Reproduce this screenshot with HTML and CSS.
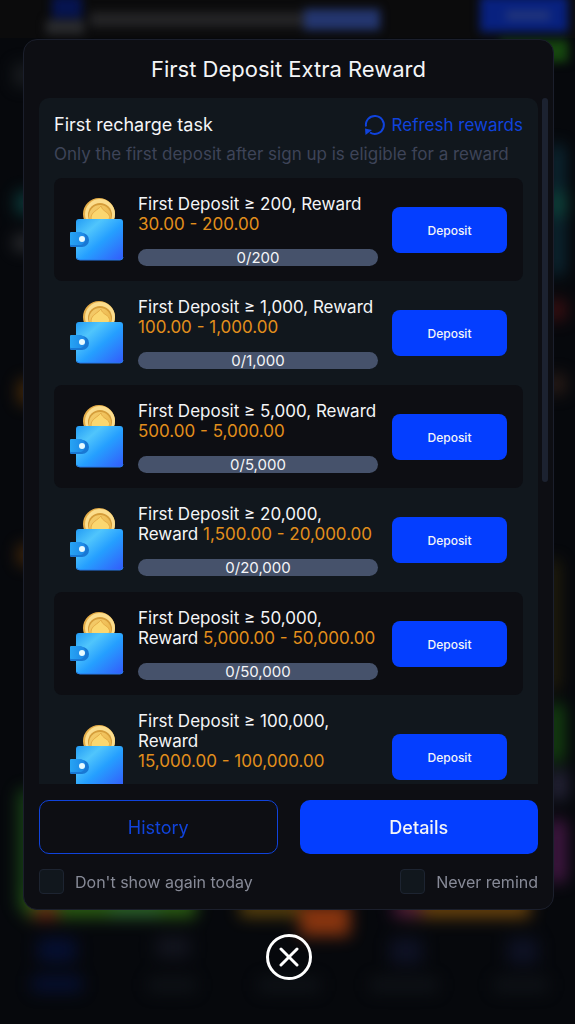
FILE: index.html
```html
<!DOCTYPE html>
<html lang="en">
<head>
    <meta charset="UTF-8">
    <meta name="viewport" content="width=device-width, initial-scale=1.0">
    <title>First Deposit Extra Reward</title>
    <link rel="stylesheet" href="styles.css">
</head>
<body>
    <!-- blurred page behind the modal -->
    <svg class="backdrop" viewBox="0 0 575 1024" preserveAspectRatio="none" aria-hidden="true">
        <defs>
            <filter id="soft" x="-10%" y="-50%" width="120%" height="200%" color-interpolation-filters="sRGB"><feGaussianBlur stdDeviation="5"/></filter>
            <filter id="softer" x="-10%" y="-10%" width="120%" height="120%" color-interpolation-filters="sRGB"><feGaussianBlur stdDeviation="8"/></filter>
        </defs>
        <rect width="575" height="1024" fill="#06080c"/>
        <rect width="575" height="38" fill="#0b0b0c"/>
        <g filter="url(#soft)">
            <rect x="52" y="-4" width="30" height="22" fill="#061450"/>
            <rect x="46" y="20" width="38" height="14" fill="#2a2b2e"/>
            <rect x="90" y="12" width="214" height="15" fill="#242426"/>
            <rect x="304" y="9" width="76" height="21" fill="#24366f"/>
            <rect x="480" y="-4" width="88" height="36" fill="#08217f"/>
            <rect x="506" y="11" width="44" height="9" fill="#24377a"/>
            <rect x="500" y="40" width="68" height="22" fill="#16460f"/>
        </g>
        <g filter="url(#softer)" opacity="0.8">
            <rect x="14" y="64" width="20" height="22" fill="#202326"/>
            <rect x="16" y="192" width="20" height="22" fill="#0d4a48"/>
            <rect x="14" y="236" width="20" height="14" fill="#3c3d40"/>
            <rect x="18" y="380" width="20" height="24" fill="#563207"/>
            <rect x="550" y="145" width="14" height="130" fill="#0f3544"/>
            <rect x="548" y="192" width="18" height="24" fill="#10594e"/>
            <rect x="546" y="300" width="20" height="20" fill="#4a1113"/>
            <rect x="546" y="374" width="20" height="20" fill="#33211a"/>
            <rect x="18" y="545" width="18" height="20" fill="#573109"/>
            <rect x="546" y="560" width="14" height="130" fill="#2c250b"/>
            <rect x="18" y="790" width="40" height="120" fill="#1c5018"/>
            <rect x="546" y="704" width="18" height="58" fill="#195211"/>
            <rect x="548" y="770" width="20" height="30" fill="#2b2940"/>
            <rect x="548" y="820" width="18" height="62" fill="#551c54"/>
            <rect x="26" y="890" width="170" height="28" fill="#326e14"/>
            <rect x="34" y="905" width="24" height="14" fill="#8a2c14"/>
            <rect x="110" y="904" width="50" height="12" fill="#34783a"/>
            <rect x="240" y="898" width="60" height="19" fill="#6f500c"/>
            <rect x="300" y="904" width="50" height="32" fill="#a84010"/>
            <rect x="400" y="896" width="130" height="22" fill="#80500c"/>
            <rect x="392" y="904" width="30" height="12" fill="#5a164e"/>
            <rect x="38" y="938" width="38" height="24" fill="#06113a"/>
            <rect x="32" y="976" width="50" height="16" fill="#06113a"/>
            <rect x="156" y="936" width="34" height="22" fill="#151722"/>
            <rect x="148" y="978" width="48" height="14" fill="#11151a"/>
            <rect x="258" y="978" width="62" height="14" fill="#11151a"/>
            <rect x="390" y="938" width="32" height="26" fill="#10142a"/>
            <rect x="370" y="978" width="68" height="14" fill="#11151a"/>
            <rect x="508" y="938" width="30" height="26" fill="#10142a"/>
            <rect x="494" y="978" width="54" height="14" fill="#11151a"/>
        </g>
    </svg>

    <!-- shared icon -->
    <svg class="sprite" aria-hidden="true">
        <defs>
            <linearGradient id="walletFill" x1="0" y1="0" x2="1" y2="1">
                <stop offset="0" stop-color="#239cf5"/>
                <stop offset="0.28" stop-color="#50c5fc"/>
                <stop offset="0.55" stop-color="#259fff"/>
                <stop offset="1" stop-color="#345bfa"/>
            </linearGradient>
            <linearGradient id="claspFill" x1="0" y1="0" x2="1" y2="0">
                <stop offset="0" stop-color="#27a4f4"/>
                <stop offset="1" stop-color="#1c86e6"/>
            </linearGradient>
            <linearGradient id="coinFill" x1="0" y1="0" x2="1" y2="1">
                <stop offset="0" stop-color="#f5cf70"/>
                <stop offset="1" stop-color="#eab040"/>
            </linearGradient>
        </defs>
        <symbol id="wallet" viewBox="0 0 54 64">
            <circle cx="29" cy="16" r="16" fill="#e5ad48"/>
            <circle cx="30" cy="16" r="15" fill="#fbdd8d"/>
            <circle cx="30" cy="17" r="12" fill="#d59d3a"/>
            <circle cx="30" cy="18" r="11" fill="url(#coinFill)"/>
            <path d="M31 8C28 12 21 14 21 20c0 4 5 5 8 2l-1 4h8l-3-4c4 2 8-1 6-5-1-3-7-4-8-9z" fill="#fbd770" stroke="#e5ad48"/>
            <rect x="6" y="21" width="47" height="41" rx="3" fill="url(#walletFill)"/>
            <path d="M7 60q1 2 3 2h40q3 0 3-3" fill="none" stroke="#2678e8"/>
            <path d="M1 35h11a7 7 0 0 1 0 14H1a1 1 0 0 1-1-1V36a1 1 0 0 1 1-1z" fill="#1878d4"/>
            <path d="M1 34h10a7 7 0 0 1 0 13H1a1 1 0 0 1-1-1V35a1 1 0 0 1 1-1z" fill="url(#claspFill)"/>
            <circle cx="12" cy="41" r="3" fill="#e8faff"/>
        </symbol>
    </svg>

    <div class="overlay">
        <div class="modal" role="dialog" aria-labelledby="title">
            <h1 id="title">First Deposit Extra Reward</h1>

            <div class="scroll-area">
                <div class="panel">
                    <div class="panel-head">
                        <h2>First recharge task</h2>
                        <button type="button" class="refresh">
                            <svg width="22" height="22" viewBox="0 0 22 22" fill="none" aria-hidden="true">
                                <path d="M2 12.5A9 9 0 1 1 6 18.5" stroke="currentColor" stroke-width="2"/>
                                <path d="M1 14.5l7 1.6-6.5 4.9z" fill="currentColor"/>
                            </svg>
                            Refresh rewards
                        </button>
                    </div>
                    <p class="hint">Only the first deposit after sign up is eligible for a reward</p>

                    <ul class="tasks">
                        <li class="task">
                            <svg class="wallet" aria-hidden="true"><use href="#wallet"/></svg>
                            <div class="task-info">
                                <p>First Deposit ≥ 200, Reward <span class="amount">30.00 - 200.00</span></p>
                                <div class="progress">0/200</div>
                            </div>
                            <button type="button" class="deposit">Deposit</button>
                        </li>
                        <li class="task">
                            <svg class="wallet" aria-hidden="true"><use href="#wallet"/></svg>
                            <div class="task-info">
                                <p>First Deposit ≥ 1,000, Reward <span class="amount">100.00 - 1,000.00</span></p>
                                <div class="progress">0/1,000</div>
                            </div>
                            <button type="button" class="deposit">Deposit</button>
                        </li>
                        <li class="task">
                            <svg class="wallet" aria-hidden="true"><use href="#wallet"/></svg>
                            <div class="task-info">
                                <p>First Deposit ≥ 5,000, Reward <span class="amount">500.00 - 5,000.00</span></p>
                                <div class="progress">0/5,000</div>
                            </div>
                            <button type="button" class="deposit">Deposit</button>
                        </li>
                        <li class="task">
                            <svg class="wallet" aria-hidden="true"><use href="#wallet"/></svg>
                            <div class="task-info">
                                <p>First Deposit ≥ 20,000, Reward <span class="amount">1,500.00 - 20,000.00</span></p>
                                <div class="progress">0/20,000</div>
                            </div>
                            <button type="button" class="deposit">Deposit</button>
                        </li>
                        <li class="task">
                            <svg class="wallet" aria-hidden="true"><use href="#wallet"/></svg>
                            <div class="task-info">
                                <p>First Deposit ≥ 50,000, Reward <span class="amount">5,000.00 - 50,000.00</span></p>
                                <div class="progress">0/50,000</div>
                            </div>
                            <button type="button" class="deposit">Deposit</button>
                        </li>
                        <li class="task">
                            <svg class="wallet" aria-hidden="true"><use href="#wallet"/></svg>
                            <div class="task-info">
                                <p>First Deposit ≥ 100,000, Reward <span class="amount">15,000.00 - 100,000.00</span></p>
                                <div class="progress"></div>
                            </div>
                            <button type="button" class="deposit">Deposit</button>
                        </li>
                    </ul>
                </div>
                <div class="scrollbar"></div>
            </div>

            <div class="actions">
                <button type="button" class="btn btn-outline">History</button>
                <button type="button" class="btn btn-primary">Details</button>
            </div>

            <div class="options">
                <label for="today"><input type="checkbox" id="today"> Don't show again today</label>
                <label for="never"><input type="checkbox" id="never"> Never remind</label>
            </div>
        </div>

        <button type="button" class="close" aria-label="Close">
            <svg width="46" height="46" viewBox="0 0 46 46" fill="none" stroke="#fff" stroke-width="3" aria-hidden="true">
                <circle cx="23" cy="23" r="21.5"/>
                <path d="M15 15l16 16M31 15L15 31" stroke-linecap="round"/>
            </svg>
        </button>
    </div>
</body>
</html>
```
FILE: styles.css
```css
* {
    box-sizing: border-box;
}

body {
    margin: 0;
    background: #06080c;
    color: #f4f5f7;
    font-family: Inter, Roboto, sans-serif;
    font-size: 17px;
    line-height: 20px;
}

h1, h2, p, ul {
    margin: 0;
    padding: 0;
    font-weight: 400;
}

button {
    border: none;
    padding: 0;
    font-family: inherit;
    cursor: pointer;
}

.backdrop {
    position: fixed;
    top: 0;
    left: 0;
    width: 100%;
    height: 100%;
}

.sprite {
    position: absolute;
    width: 0;
    height: 0;
}

.overlay {
    position: relative;
    display: flex;
    flex-direction: column;
    align-items: center;
    height: 100vh;
    padding: 39px 21px 44px 23px;
}

.modal {
    display: flex;
    flex-direction: column;
    flex: 1;
    min-height: 0;
    width: 100%;
    padding: 0 15px 15px;
    background: #0d0e13;
    border: 1px solid #1b1f2c;
    border-radius: 14px;
}

h1 {
    font-size: 22px;
    line-height: 58px;
    text-align: center;
}

.scroll-area {
    display: flex;
    flex: 1;
    gap: 4px;
    min-height: 0;
    margin-right: -10px;
}

.panel {
    flex: 1;
    padding: 16px 15px 0;
    overflow: hidden;
    background: #11171d;
    border-radius: 10px 10px 0 0;
}

.scrollbar {
    width: 6px;
    height: 56%;
    background: #1c2230;
    border-radius: 3px;
}

.panel-head {
    display: flex;
    justify-content: space-between;
    align-items: center;
    height: 22px;
}

h2 {
    font-size: 18px;
}

.refresh {
    display: flex;
    align-items: center;
    gap: 6px;
    background: none;
    color: #1043dc;
    font-size: 17px;
}

.hint {
    margin: 8px 0 14px;
    color: #3e4458;
}

.tasks {
    list-style: none;
}

.task {
    display: flex;
    align-items: center;
    gap: 14px;
    padding: 16px 16px 15px;
}

.task:nth-child(odd) {
    background: #0d0e13;
    border-radius: 8px;
}

.task:nth-child(even) {
    padding-bottom: 16px;
}

.wallet {
    flex: none;
    width: 54px;
    height: 64px;
}

.task-info {
    flex: 1;
}

.amount {
    color: #e28f1c;
    white-space: nowrap;
}

.progress {
    height: 17px;
    margin-top: 15px;
    border-radius: 9px;
    background: #46526b;
    font-size: 15px;
    line-height: 17px;
    text-align: center;
}

.deposit {
    flex: none;
    width: 115px;
    height: 46px;
    border-radius: 8px;
    background: #043eff;
    color: #f4f5f7;
    font-size: 12px;
    font-weight: 500;
}

.actions {
    display: grid;
    grid-template-columns: 1fr 1fr;
    gap: 22px;
    margin-top: 16px;
}

.btn {
    height: 54px;
    border-radius: 10px;
    font-size: 18px;
}

.btn-outline {
    border: 1px solid #1043dc;
    background: none;
    color: #1043dc;
}

.btn-primary {
    background: #043eff;
    color: #f4f5f7;
    font-weight: 500;
}

.options {
    display: flex;
    justify-content: space-between;
    margin-top: 15px;
    color: #878a97;
    font-size: 16px;
}

.options label {
    display: flex;
    align-items: center;
    gap: 11px;
}

.options input {
    appearance: none;
    width: 25px;
    height: 25px;
    margin: 0;
    border: 1px solid #1d2431;
    border-radius: 4px;
    background: #11171d;
}

.options input:checked {
    background: #043eff;
}

.close {
    height: 46px;
    margin-top: 24px;
    background: none;
}

.close svg {
    display: block;
}
```
